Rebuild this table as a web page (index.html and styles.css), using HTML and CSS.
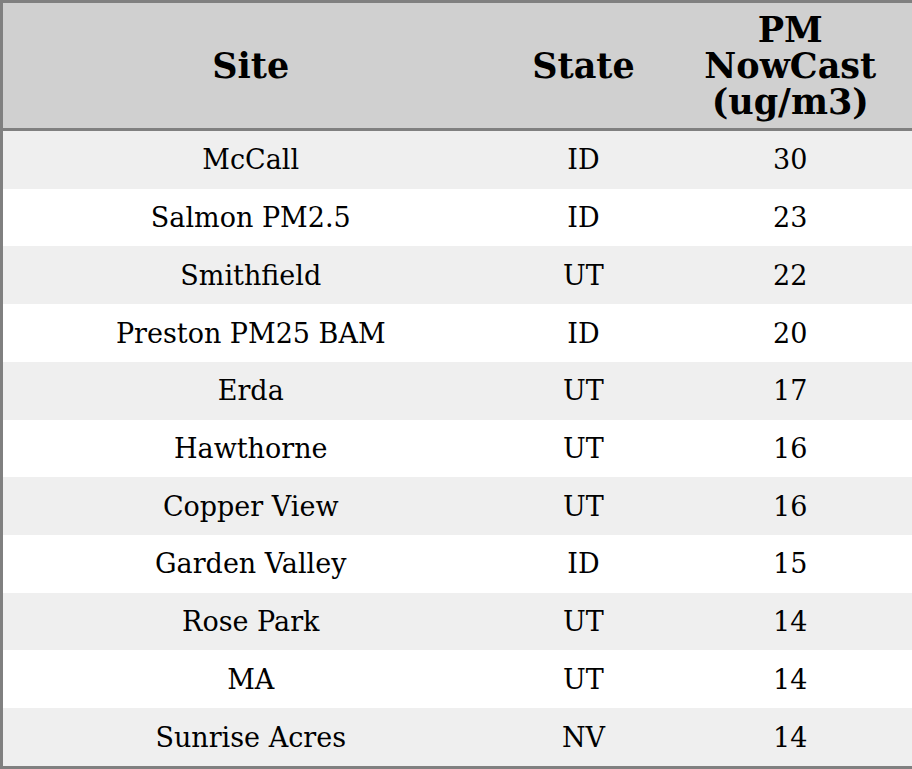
FILE: index.html
```html
<!DOCTYPE html>
<html>
<head>
<meta charset="utf-8">
<link rel="stylesheet" href="styles.css">
</head>
<body>
<table class="aq">
  <colgroup>
    <col class="c-site">
    <col class="c-state">
    <col class="c-pm">
  </colgroup>
  <thead>
    <tr><th>Site</th><th>State</th><th>PM<br>NowCast<br>(ug/m3)</th></tr>
  </thead>
  <tbody>
    <tr><td>McCall</td><td>ID</td><td>30</td></tr>
    <tr><td>Salmon PM2.5</td><td>ID</td><td>23</td></tr>
    <tr><td>Smithfield</td><td>UT</td><td>22</td></tr>
    <tr><td>Preston PM25 BAM</td><td>ID</td><td>20</td></tr>
    <tr><td>Erda</td><td>UT</td><td>17</td></tr>
    <tr><td>Hawthorne</td><td>UT</td><td>16</td></tr>
    <tr><td>Copper View</td><td>UT</td><td>16</td></tr>
    <tr><td>Garden Valley</td><td>ID</td><td>15</td></tr>
    <tr><td>Rose Park</td><td>UT</td><td>14</td></tr>
    <tr><td>MA</td><td>UT</td><td>14</td></tr>
    <tr><td>Sunrise Acres</td><td>NV</td><td>14</td></tr>
  </tbody>
</table>
</body>
</html>
```
FILE: styles.css
```css
html, body {
  margin: 0;
  padding: 0;
  background: #ffffff;
}
.aq {
  width: 912px;
  height: 769px;
  border-collapse: collapse;
  table-layout: fixed;
  border: 3px solid #808080;
  font-family: "DejaVu Serif", serif;
  color: #000;
}
.c-site { width: 497px; }
.c-state { width: 170px; }
.c-pm { width: 245px; }
.aq th {
  background: #d0d0d0;
  font-size: 35px;
  font-weight: bold;
  line-height: 36px;
  height: 125px;
  padding: 0;
  text-align: center;
  vertical-align: middle;
  border-bottom: 3px solid #808080;
}
.aq td {
  font-size: 27px;
  text-align: center;
  vertical-align: middle;
  padding: 0;
  height: 57px;
}
.aq tbody tr:nth-child(odd) td {
  background: #efefef;
}
```
